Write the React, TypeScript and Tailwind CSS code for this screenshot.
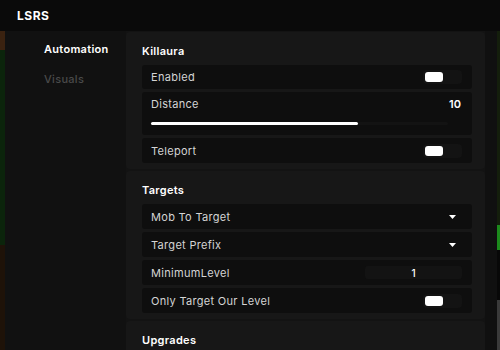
import React from "react";

const font = { fontFamily: "Inter, 'Noto Sans', sans-serif" };

function Row({ children, h = "h-[24px]" }: { children: React.ReactNode; h?: string }) {
  return <div className={`${h} bg-[#0e0e0e] rounded-[3px] flex items-center pl-[9px] pr-[10px]`}>{children}</div>;
}

function Label({ text }: { text: string }) {
  return <span className="text-[11px] leading-[14px] text-[#d4d4d4] tracking-[0.3px]">{text}</span>;
}

function Toggle() {
  return (
    <div className="ml-auto w-[39px] h-[14px] bg-[#131313] rounded-[4px] flex items-center pl-[2px]">
      <div className="w-[18px] h-[10px] bg-white rounded-[3px]" />
    </div>
  );
}

function Dropdown() {
  return (
    <svg className="ml-auto mr-[6px]" width="7" height="4" viewBox="0 0 7 4">
      <path d="M0 0 L7 0 L3.5 4 Z" fill="#ffffff" />
    </svg>
  );
}

function Section({ title, children }: { title: string; children?: React.ReactNode }) {
  return (
    <div className="bg-[#171717] rounded-[4px] pl-[16px] pr-[13px] pt-[12px] pb-[6px]">
      <div className="text-[11px] leading-[14px] font-semibold text-white tracking-[0.3px] mb-[7px]">{title}</div>
      <div className="flex flex-col gap-[3px]">{children}</div>
    </div>
  );
}

export default function App() {
  return (
    <div className="w-[500px] h-[350px] overflow-hidden bg-black flex flex-col" style={font}>
      <div className="h-[31px] shrink-0 bg-[#0a0a0a] flex items-center pl-[17px]">
        <span className="text-[12px] font-bold text-white tracking-[0.5px]">LSRS</span>
      </div>
      <div className="flex flex-1 min-h-0">
        <div className="w-[5px] flex flex-col">
          <div className="h-[19px] bg-[#3a2210]" />
          <div className="h-[195px] bg-[#0b240b]" />
          <div className="flex-1 bg-[#1e1208]" />
        </div>
        <div className="w-[121px] bg-[#111111] flex flex-col pl-[39px] pt-[11px] gap-[16px]">
          <span className="text-[11px] leading-[14px] font-semibold text-white tracking-[0.3px]">Automation</span>
          <span className="text-[11px] leading-[14px] font-medium text-[#4a4a4a] tracking-[0.3px]">Visuals</span>
        </div>
        <div className="w-[359px] bg-[#131313] flex flex-col gap-[2px] pt-[1px] overflow-hidden">
          <Section title="Killaura">
            <Row>
              <Label text="Enabled" />
              <Toggle />
            </Row>
            <div className="h-[43px] bg-[#0e0e0e] rounded-[3px] flex flex-col pl-[9px] pr-[11px] pt-[3px]">
              <div className="flex items-center h-[14px] mt-[2px]">
                <Label text="Distance" />
                <span className="ml-auto text-[11px] font-semibold text-white">10</span>
              </div>
              <div className="mt-[11px] h-[3px] w-[297px] bg-[#131313] rounded-full">
                <div className="h-[3px] w-[207px] bg-white rounded-full" />
              </div>
            </div>
            <Row h="h-[25px]">
              <Label text="Teleport" />
              <Toggle />
            </Row>
          </Section>
          <Section title="Targets">
            <Row h="h-[25px]">
              <Label text="Mob To Target" />
              <Dropdown />
            </Row>
            <Row h="h-[25px]">
              <Label text="Target Prefix" />
              <Dropdown />
            </Row>
            <Row h="h-[25px]">
              <Label text="MinimumLevel" />
              <div className="ml-auto w-[97px] h-[13px] bg-[#131313] rounded-[3px] flex items-center justify-center">
                <span className="text-[10px] text-[#ffffff] leading-none font-medium">1</span>
              </div>
            </Row>
            <Row h="h-[25px]">
              <Label text="Only Target Our Level" />
              <Toggle />
            </Row>
          </Section>
          <Section title="Upgrades" />
        </div>
        <div className="w-[12px] bg-[#101010]" />
        <div className="w-[3px] flex flex-col">
          <div className="h-[194px] bg-[#141e0c]" />
          <div className="h-[25px] bg-[#1c8a1c]" />
          <div className="h-[50px] bg-[#080808]" />
          <div className="flex-1 bg-[#3a3a3a]" />
        </div>
      </div>
    </div>
  );
}
